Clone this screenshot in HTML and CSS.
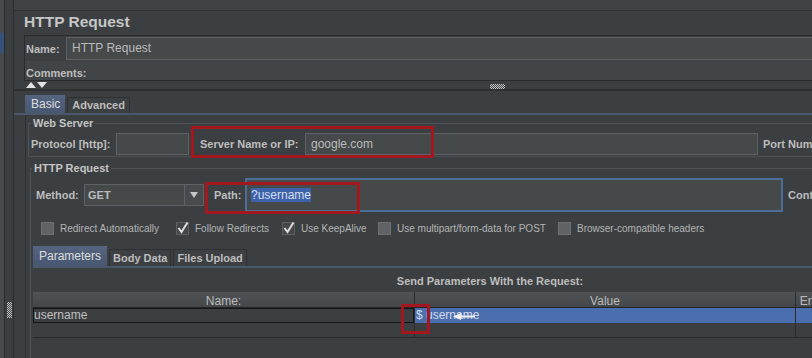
FILE: index.html
```html
<!DOCTYPE html>
<html lang="en">
<head>
  <meta charset="UTF-8">
  <meta name="viewport" content="width=device-width, initial-scale=1.0">
  <title>HTTP Request</title>
  <link rel="stylesheet" href="styles.css">
</head>
<body>
  <div class="window">
    <div class="tree-edge"><div class="tree-selection"></div></div>
    <div class="split-bar"><div class="split-grip dots"></div></div>

    <div class="editor">
      <div class="editor-top"></div>
      <h1 class="title">HTTP Request</h1>

      <div class="name-panel">
        <div class="name-row">
          <span class="label name-label">Name:</span>
          <div class="field name-field">HTTP Request</div>
        </div>
        <div class="comments-row">
          <span class="label">Comments:</span>
        </div>
      </div>

      <div class="collapse-bar">
        <svg class="collapse-arrows" width="22" height="6" viewBox="0 0 22 6">
          <polygon points="0,6 5,0 10,6" fill="#e2e2e2"/>
          <polygon points="11,0 21,0 16,6" fill="#e2e2e2"/>
        </svg>
        <span class="collapse-grip dots"></span>
      </div>

      <div class="tabs main-tabs">
        <span class="tab active">Basic</span>
        <span class="tab">Advanced</span>
      </div>

      <div class="tab-body">
        <fieldset class="group web-server">
          <legend>Web Server</legend>
          <div class="form-row">
            <span class="label protocol-label">Protocol [http]:</span>
            <div class="field protocol-field"></div>
            <span class="label server-label">Server Name or IP:</span>
            <div class="field server-field">google.com</div>
            <span class="label after-label">Port Number:</span>
          </div>
        </fieldset>

        <fieldset class="group http-group">
          <legend>HTTP Request</legend>
          <div class="form-row method-row">
            <span class="label method-label">Method:</span>
            <div class="combo">
              <span class="combo-value">GET</span>
              <span class="combo-arrow">
                <svg width="8" height="6" viewBox="0 0 8 6"><polygon points="0,0 8,0 4,6" fill="#c4c4c4"/></svg>
              </span>
            </div>
            <span class="label path-label">Path:</span>
            <div class="field path-field"><span class="selection">?username</span></div>
            <span class="label after-label">Content encoding:</span>
          </div>

          <div class="checks">
            <span class="check"><span class="box"></span>Redirect Automatically</span>
            <span class="check">
              <svg class="box-checked" width="13" height="13" viewBox="0 0 13 13"><rect x="0.5" y="0.5" width="12" height="12" fill="#43474a" stroke="#5d6062"/><path d="M2.5 6 L5.5 10 L11.5 0.5" fill="none" stroke="#dedede" stroke-width="2"/></svg>
              Follow Redirects
            </span>
            <span class="check">
              <svg class="box-checked" width="13" height="13" viewBox="0 0 13 13"><rect x="0.5" y="0.5" width="12" height="12" fill="#43474a" stroke="#5d6062"/><path d="M2.5 6 L5.5 10 L11.5 0.5" fill="none" stroke="#dedede" stroke-width="2"/></svg>
              Use KeepAlive
            </span>
            <span class="check"><span class="box"></span>Use multipart/form-data for POST</span>
            <span class="check"><span class="box"></span>Browser-compatible headers</span>
          </div>

          <div class="params">
            <div class="tabs param-tabs">
              <span class="tab active">Parameters</span>
              <span class="tab">Body Data</span>
              <span class="tab">Files Upload</span>
            </div>
            <div class="params-title">Send Parameters With the Request:</div>
            <div class="param-grid">
              <div class="cell head">Name:</div>
              <div class="cell head">Value</div>
              <div class="cell head">Encode?</div>
              <div class="cell head">Include Equals?</div>

              <div class="cell editing">username</div>
              <div class="cell selected">$ username</div>
              <div class="cell selected"></div>
              <div class="cell selected"></div>

              <div class="cell last"></div>
              <div class="cell last"></div>
              <div class="cell last"></div>
              <div class="cell last"></div>
            </div>
          </div>
        </fieldset>
      </div>
    </div>

    <!-- annotation marks drawn over the screenshot -->
    <div class="mark mark-server"></div>
    <div class="mark mark-path"></div>
    <div class="mark mark-value"></div>
    <svg class="pointer" width="23" height="7" viewBox="0 0 23 7">
      <polygon points="0,3.5 8,0 8,7" fill="#f2f2f2"/>
      <rect x="7" y="2.5" width="15" height="2" fill="#eeeeee"/>
    </svg>
  </div>
</body>
</html>
```

FILE: styles.css
```css
body {
  margin: 0;
  overflow: hidden;
  background-color: #3c3f41;
  color: #bbbbbb;
  font-family: "Liberation Sans", Arial, sans-serif;
  font-size: 12px;
}

.window {
  position: relative;
  display: flex;
  width: 980px;
  height: 358px;
  overflow: hidden;
}

/* left edge: tree + split bar */
.tree-edge {
  width: 4px;
  background-color: #484a4c;
  border-right: 1px solid #2a2b2c;
}

.tree-selection {
  margin-top: 33px;
  height: 20px;
  background-color: #36517a;
}

.split-bar {
  width: 8px;
  border-right: 1px solid #2a2b2c;
}

.split-grip {
  margin: 302px 0 0 2px;
  width: 5px;
  height: 16px;
}

.dots {
  background: repeating-conic-gradient(#c9c9c9 0 25%, transparent 0 50%) 0 0 / 2px 2px;
}

/* editor */
.editor {
  flex: none;
  width: 966px;
}

.editor-top {
  height: 10px;
  background-color: #3f4244;
  border-bottom: 1px solid #303234;
}

.title {
  margin: 0;
  padding: 0 0 3px 10px;
  font-size: 15.5px;
  line-height: 21px;
  color: #c6c6c6;
}

.label {
  font-size: 11px;
  font-weight: bold;
  color: #bdbdbd;
  white-space: nowrap;
}

.field {
  box-sizing: border-box;
  height: 22px;
  padding: 0 5px;
  background-color: #45494a;
  border: 1px solid #5f6264;
  line-height: 20px;
  white-space: nowrap;
}

.name-panel {
  margin-left: 10px;
  border-top: 1px solid #2b2b2b;
  border-left: 1px solid #2b2b2b;
  border-bottom: 1px solid #2b2b2b;
}

.name-row {
  display: flex;
  align-items: center;
  padding: 1px 0;
}

.name-label {
  width: 40px;
  padding-left: 1px;
}

.name-field {
  flex: 1;
  height: 23px;
  line-height: 21px;
}

.comments-row {
  height: 14px;
  padding: 5px 0 0 1px;
  line-height: 14px;
  background-color: #424547;
}

.collapse-bar {
  display: grid;
  grid-template-columns: 1fr auto 1fr;
  align-items: center;
  height: 8px;
  border-bottom: 2px solid #2d2f31;
}

.collapse-arrows {
  margin-left: 12px;
}

.collapse-grip {
  width: 15px;
  height: 5px;
  margin-top: 3px;
}

/* tabs */
.tabs {
  display: flex;
  align-items: flex-end;
  gap: 2px;
  border-bottom: 2px solid #4b586b;
}

.main-tabs {
  padding: 4px 0 0 11px;
}

.tab {
  box-sizing: border-box;
  height: 16px;
  padding: 0 4px;
  border: 1px solid #2e3032;
  border-bottom: none;
  background-color: #3d4042;
  font-size: 11px;
  font-weight: bold;
  line-height: 15px;
  color: #bdbdbd;
  white-space: nowrap;
}

.tab.active {
  height: 18px;
  padding: 0 5px 0 6px;
  border: none;
  background: linear-gradient(#55657f, #475772);
  font-size: 12px;
  font-weight: normal;
  line-height: 18px;
  color: #dcdcdc;
}

.param-tabs .tab {
  height: 17px;
  padding: 0 3px;
  line-height: 16px;
}

.param-tabs .tab.active {
  height: 20px;
  padding: 0 6px;
  line-height: 20px;
}

.tab-body {
  height: 300px;
  margin-left: 11px;
  padding-top: 2px;
  border-left: 1px solid #2e3032;
}

/* titled groups */
.group {
  min-width: 0;
  margin: 0;
  padding: 0;
  border: 1px solid #4f5254;
}

.group legend {
  padding: 0 2px;
  font-size: 11px;
  font-weight: bold;
  line-height: 12px;
  color: #c4c4c4;
}

.web-server {
  margin-left: 2px;
  padding: 4px 0 1px 2px;
}

.http-group {
  height: 260px;
  margin: 5px 0 0 4px;
  padding-left: 1px;
}

.form-row {
  display: flex;
  align-items: center;
  height: 22px;
}

.protocol-label {
  width: 85px;
}

.protocol-field {
  width: 73px;
}

.server-label {
  width: 105px;
  margin-left: 11px;
}

.server-field {
  width: 453px;
}

.after-label {
  margin-left: 5px;
}

.method-row {
  height: 34px;
  margin-top: 4px;
}

.method-label {
  width: 48px;
  margin-left: 4px;
}

.combo {
  display: flex;
  box-sizing: border-box;
  width: 120px;
  height: 22px;
  background-color: #45494a;
  border: 1px solid #5f6264;
}

.combo-value {
  flex: 1;
  padding-left: 3px;
  font-size: 11px;
  font-weight: bold;
  line-height: 20px;
}

.combo-arrow {
  display: flex;
  align-items: center;
  justify-content: center;
  width: 18px;
  background-color: #484b4e;
  border-left: 1px solid #5f6264;
}

.path-label {
  width: 31px;
  margin-left: 10px;
}

.path-field {
  display: flex;
  align-items: center;
  width: 538px;
  height: 34px;
  padding: 0 4px;
  border: 2px solid #4a6e97;
}

.selection {
  background-color: #3c62ab;
  color: #d6deee;
  line-height: 14px;
}

/* checkboxes */
.checks {
  display: grid;
  grid-template-columns: 135px 106px 96px 180px auto;
  margin-top: 10px;
  padding-left: 9px;
}

.check {
  display: flex;
  align-items: center;
  gap: 6px;
  height: 13px;
  font-size: 10px;
  color: #b4b4b4;
  white-space: nowrap;
}

.box {
  box-sizing: border-box;
  width: 13px;
  height: 13px;
  background-color: #606365;
  border: 1px solid #6d7072;
}

.box-checked {
  flex: none;
  overflow: visible;
}

/* parameters table */
.params {
  width: 914px;
  margin: 11px 0 0 1px;
}

.params-title {
  margin-top: 6px;
  font-size: 11px;
  font-weight: bold;
  line-height: 14px;
  text-align: center;
  color: #bdbdbd;
}

.param-grid {
  display: grid;
  grid-template-columns: 382px 381px 56px 95px;
  margin-top: 4px;
}

.cell {
  box-sizing: border-box;
  height: 15px;
  padding-left: 1px;
  border-right: 1px solid #2b2b2b;
  line-height: 15px;
  white-space: nowrap;
  overflow: hidden;
}

.cell.head {
  height: 16px;
  padding: 3px 0 0;
  background: linear-gradient(#505355, #444749);
  border-bottom: 1px solid #232425;
  line-height: 12px;
  text-align: center;
  color: #bbbbbb;
}

.cell.editing {
  box-shadow: inset 0 0 0 1px #151617;
  color: #c0c0c0;
}

.cell.selected {
  background-color: #4b6eaf;
  color: #d3dae8;
}

.cell.last {
  border-bottom: 1px solid #2b2b2b;
}

/* annotations */
.mark {
  position: absolute;
  box-sizing: border-box;
  border: 3px solid #a3171f;
}

.mark-server {
  left: 191px;
  top: 126px;
  width: 243px;
  height: 32px;
}

.mark-path {
  left: 205px;
  top: 182px;
  width: 155px;
  height: 32px;
}

.mark-value {
  left: 401px;
  top: 304px;
  width: 29px;
  height: 30px;
}

.pointer {
  position: absolute;
  left: 453px;
  top: 313px;
}
```
